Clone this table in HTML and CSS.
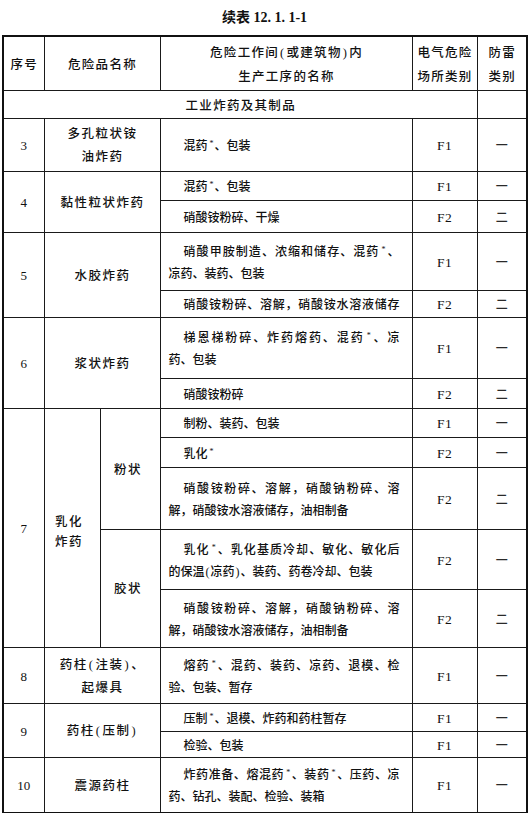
FILE: index.html
```html
<!DOCTYPE html>
<html lang="zh-CN">
<head>
<meta charset="utf-8">
<title>续表 12.1.1-1</title>
<link rel="stylesheet" href="styles.css">
</head>
<body>
<div class="title">续表 12. 1. 1-1</div>
<table class="tbl">
  <colgroup>
    <col class="c1"><col class="c2a"><col class="c2b"><col class="c3"><col class="c4"><col class="c5">
  </colgroup>
  <tr class="h54">
    <td class="hd">序号</td>
    <td class="hd" colspan="2">危险品名称</td>
    <td class="hd hd3">危险工作间<span class="par">(</span>或建筑物<span class="par">)</span>内<br>生产工序的名称</td>
    <td class="hd">电气危险<br>场所类别</td>
    <td class="hd">防雷<br>类别</td>
  </tr>
  <tr class="h25">
    <td class="hd" colspan="5">工业炸药及其制品</td>
    <td></td>
  </tr>

  <tr class="h53">
    <td class="num">3</td>
    <td class="name" colspan="2">多孔粒状铵<br>油炸药</td>
    <td class="proc"><span class="l1">混药<sup>*</sup>、包装</span></td>
    <td class="cat">F1</td>
    <td class="lv">一</td>
  </tr>

  <tr class="h29">
    <td class="num" rowspan="2">4</td>
    <td class="name" colspan="2" rowspan="2">黏性粒状炸药</td>
    <td class="proc"><span class="l1">混药<sup>*</sup>、包装</span></td>
    <td class="cat">F1</td>
    <td class="lv">一</td>
  </tr>
  <tr class="h32">
    <td class="proc"><span class="l1">硝酸铵粉碎、干燥</span></td>
    <td class="cat">F2</td>
    <td class="lv">二</td>
  </tr>

  <tr class="h58">
    <td class="num" rowspan="2">5</td>
    <td class="name" colspan="2" rowspan="2">水胶炸药</td>
    <td class="proc"><span class="l1 j">硝酸甲胺制造、浓缩和储存、混药<sup>*</sup>、</span><span class="l2">凉药、装药、包装</span></td>
    <td class="cat">F1</td>
    <td class="lv">一</td>
  </tr>
  <tr class="h27">
    <td class="proc"><span class="l1 j">硝酸铵粉碎、溶解，硝酸铵水溶液储存</span></td>
    <td class="cat">F2</td>
    <td class="lv">二</td>
  </tr>

  <tr class="h61">
    <td class="num" rowspan="2">6</td>
    <td class="name" colspan="2" rowspan="2">浆状炸药</td>
    <td class="proc"><span class="l1 j">梯恩梯粉碎、炸药熔药、混药<sup>*</sup>、凉</span><span class="l2">药、包装</span></td>
    <td class="cat">F1</td>
    <td class="lv">一</td>
  </tr>
  <tr class="h30">
    <td class="proc"><span class="l1">硝酸铵粉碎</span></td>
    <td class="cat">F2</td>
    <td class="lv">二</td>
  </tr>

  <tr class="h29">
    <td class="num" rowspan="5">7</td>
    <td class="name sub" rowspan="5">乳化<br>炸药</td>
    <td class="name form" rowspan="3">粉状</td>
    <td class="proc"><span class="l1">制粉、装药、包装</span></td>
    <td class="cat">F1</td>
    <td class="lv">一</td>
  </tr>
  <tr class="h30">
    <td class="proc"><span class="l1">乳化<sup>*</sup></span></td>
    <td class="cat">F2</td>
    <td class="lv">一</td>
  </tr>
  <tr class="h62">
    <td class="proc"><span class="l1 j">硝酸铵粉碎、溶解，硝酸钠粉碎、溶</span><span class="l2">解，硝酸铵水溶液储存，油相制备</span></td>
    <td class="cat">F2</td>
    <td class="lv">二</td>
  </tr>
  <tr class="h60">
    <td class="name form" rowspan="2">胶状</td>
    <td class="proc"><span class="l1 j">乳化<sup>*</sup>、乳化基质冷却、敏化、敏化后</span><span class="l2">的保温<span class="par">(</span>凉药<span class="par">)</span>、装药、药卷冷却、包装</span></td>
    <td class="cat">F2</td>
    <td class="lv">一</td>
  </tr>
  <tr class="h58">
    <td class="proc"><span class="l1 j">硝酸铵粉碎、溶解，硝酸钠粉碎、溶</span><span class="l2">解，硝酸铵水溶液储存，油相制备</span></td>
    <td class="cat">F2</td>
    <td class="lv">二</td>
  </tr>

  <tr class="h56">
    <td class="num">8</td>
    <td class="name" colspan="2">药柱<span class="par">(</span>注装<span class="par">)</span>、<br>起爆具</td>
    <td class="proc"><span class="l1 j">熔药<sup>*</sup>、混药、装药、凉药、退模、检</span><span class="l2">验、包装、暂存</span></td>
    <td class="cat">F1</td>
    <td class="lv">一</td>
  </tr>

  <tr class="h28">
    <td class="num" rowspan="2">9</td>
    <td class="name" colspan="2" rowspan="2">药柱<span class="par">(</span>压制<span class="par">)</span></td>
    <td class="proc"><span class="l1">压制<sup>*</sup>、退模、炸药和药柱暂存</span></td>
    <td class="cat">F1</td>
    <td class="lv">一</td>
  </tr>
  <tr class="h26">
    <td class="proc"><span class="l1">检验、包装</span></td>
    <td class="cat">F1</td>
    <td class="lv">一</td>
  </tr>

  <tr class="h56">
    <td class="num">10</td>
    <td class="name" colspan="2">震源药柱</td>
    <td class="proc"><span class="l1 j">炸药准备、熔混药<sup>*</sup>、装药<sup>*</sup>、压药、凉</span><span class="l2">药、钻孔、装配、检验、装箱</span></td>
    <td class="cat">F1</td>
    <td class="lv">一</td>
  </tr>
</table>
</body>
</html>
```

FILE: styles.css
```css
html, body {
  margin: 0;
  padding: 0;
  background: #ffffff;
}

body {
  color: #111111;
  font-family: "Liberation Serif", "Noto Sans CJK SC", serif;
  font-weight: 500;
}

.title {
  height: 35px;
  line-height: 36px;
  text-align: center;
  font-size: 14px;
  font-weight: bold;
}

.tbl {
  margin-left: 2px;
  width: 524px;
  border-collapse: collapse;
  table-layout: fixed;
  border: 2px solid #111111;
}

.c1 { width: 41px; }
.c2a { width: 56px; }
.c2b { width: 60px; }
.c3 { width: 252px; }
.c4 { width: 65px; }
.c5 { width: 50px; }

.tbl td {
  border: 1px solid #1a1a1a;
  padding: 3px 0 0 0;
  text-align: center;
  vertical-align: middle;
  font-size: 12.5px;
  line-height: 22px;
}

.h25 { height: 25px; }
.h26 { height: 26px; }
.h27 { height: 27px; }
.h28 { height: 28px; }
.h29 { height: 29px; }
.h30 { height: 30px; }
.h32 { height: 32px; }
.h53 { height: 53px; }
.h54 { height: 54px; }
.h56 { height: 56px; }
.h58 { height: 58px; }
.h60 { height: 60px; }
.h61 { height: 61px; }
.h62 { height: 62px; }

.tbl td.hd {
  letter-spacing: 1.3px;
  line-height: 24px;
  padding-left: 1px;
}

.par {
  font-family: "Liberation Serif", serif;
  font-weight: normal;
  margin: 0 1px;
}

.tbl td.num {
  font-size: 13px;
}

.tbl td.name {
  letter-spacing: 1.5px;
  line-height: 23px;
  padding-left: 1px;
}

.tbl td.sub {
  line-height: 20px;
  padding-top: 8px;
  padding-left: 0;
  padding-right: 6px;
}

.tbl td.form {
  padding-left: 0;
  padding-right: 4px;
}

.tbl td.proc {
  text-align: left;
  font-size: 12px;
  line-height: 22px;
  padding: 3px 12px 0 8px;
}

.l1 {
  display: block;
  text-indent: 15px;
}

.l2 {
  display: block;
}

.j {
  text-align: justify;
  text-align-last: justify;
}

.tbl td.cat {
  font-size: 13.5px;
  letter-spacing: 0.5px;
}

.tbl td.lv {
  font-size: 12px;
  color: #2a2a2a;
}

sup {
  font-size: 8px;
  line-height: 0;
  vertical-align: 4px;
  margin: 0 1px 0 2px;
}
```
